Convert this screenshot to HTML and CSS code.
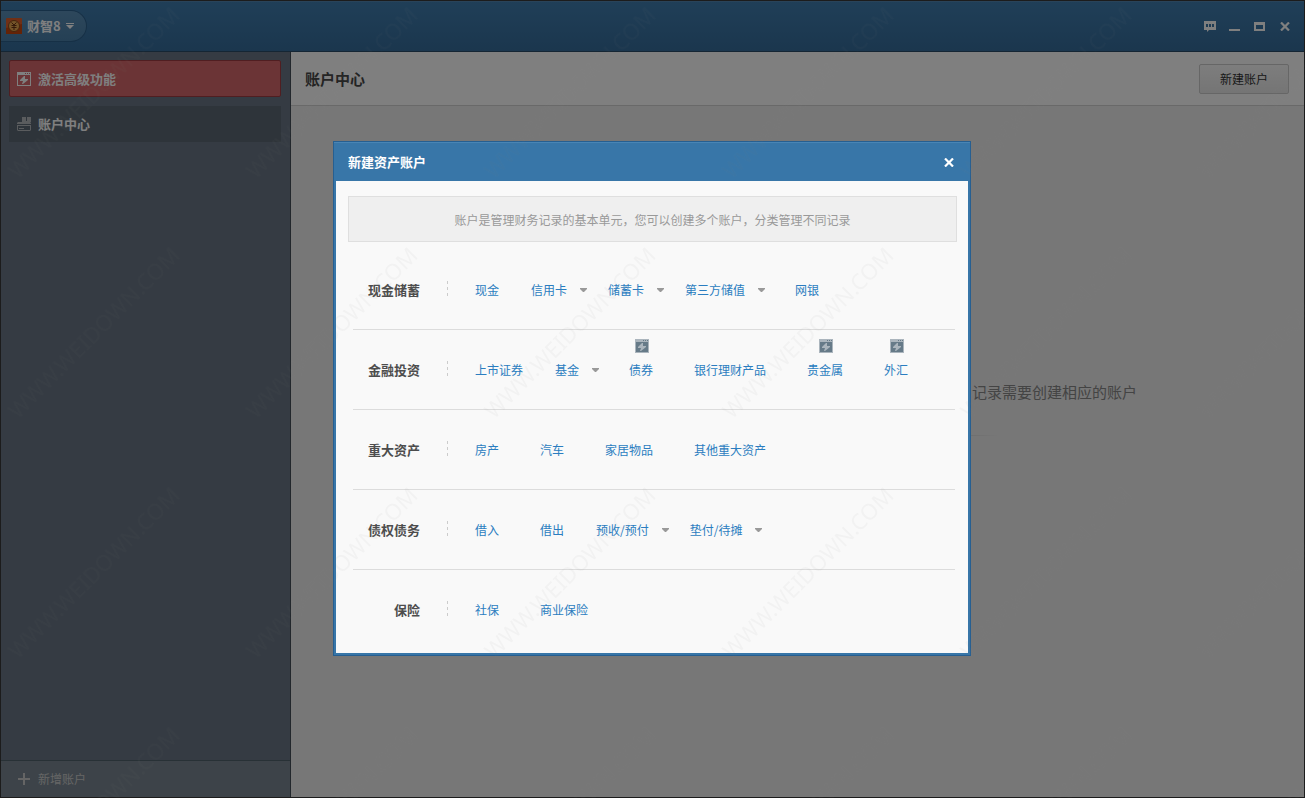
FILE: index.html
```html
<!DOCTYPE html>
<html lang="zh-CN">
<head>
<meta charset="utf-8">
<title>财智8</title>
<link rel="stylesheet" href="styles.css">
</head>
<body>
<svg class="defs" aria-hidden="true">
  <symbol id="bolt" viewBox="0 0 14 14">
    <path fill-rule="evenodd" d="M0 0H14V14H0ZM1 3V13H13V3ZM8 1V2H9V1ZM10 1V2H11V1ZM12 1V2H13V1Z"/>
    <path d="M8 4H7L3 8V9H6L5 12H6L11 8V7H8Z"/>
  </symbol>
  <symbol id="caret" viewBox="0 0 7 4"><path d="M0 0H7V1L4 4H3L0 1Z"/></symbol>
  <symbol id="close" viewBox="0 0 10 9"><path d="M1 0.500L9 8.500M9 0.500L1 8.500" fill="none" stroke="currentColor" stroke-width="2.200"/></symbol>
</svg>

<div class="window">
  <header class="titlebar">
    <button class="brand" type="button">
      <svg class="logo" viewBox="0 0 16 16" aria-hidden="true">
        <rect width="16" height="16" rx="1" fill="#e0602c"/>
        <path d="M0 10L16 6V16H0Z" fill="#c8460e"/>
        <circle cx="8" cy="8" r="5.500" fill="#e8a850" stroke="#8a4a1c"/>
        <path d="M5.500 4.500L8 7 10.500 4.500M8 7V12M5.500 7.500H10.500M5.500 9.500H10.500" fill="none" stroke="#6a3414"/>
      </svg>
      <span>财智8</span>
      <svg class="brand-arrow" viewBox="0 0 8 6" aria-hidden="true"><path d="M0 0H8V1H0ZM0 2H8L4 6Z"/></svg>
    </button>
    <div class="controls">
      <button type="button" aria-label="反馈"><svg width="12" height="11" viewBox="0 0 12 11"><path fill-rule="evenodd" d="M0 0H12V9H5L3 11V9H0ZM2 3V6H4V3ZM5 3V6H7V3ZM8 3V6H10V3Z"/></svg></button>
      <button type="button" aria-label="最小化"><svg width="11" height="9" viewBox="0 0 11 9"><path d="M0 7H11V9H0Z"/></svg></button>
      <button type="button" aria-label="最大化"><svg width="11" height="9" viewBox="0 0 11 9"><path fill-rule="evenodd" d="M0 0H11V9H0ZM2 3V7H9V3Z"/></svg></button>
      <button type="button" aria-label="关闭"><svg width="10" height="9"><use href="#close"/></svg></button>
    </div>
  </header>

  <div class="workspace">
    <aside class="sidebar">
      <nav class="menu">
        <button class="menu-item upgrade" type="button"><svg width="14" height="14" aria-hidden="true"><use href="#bolt"/></svg>激活高级功能</button>
        <button class="menu-item current" type="button"><svg width="14" height="14" viewBox="0 0 14 14" aria-hidden="true"><path fill-rule="evenodd" d="M5 0H9V4H10V0H14V5H5ZM1 5H13L14 6V7H0V6ZM0 8H14V13L13 14H1L0 13ZM1 9V13H13V9ZM2 11H7V12H2Z"/></svg>账户中心</button>
      </nav>
      <button class="add" type="button"><svg width="12" height="12" viewBox="0 0 12 12" aria-hidden="true"><path d="M5 0H7V5H12V7H7V12H5V7H0V5H5Z"/></svg>新增账户</button>
    </aside>
    <main class="main">
      <div class="page-head">
        <h1>账户中心</h1>
        <button class="new" type="button">新建账户</button>
      </div>
      <div class="empty"><p>记录需要创建相应的账户</p><hr></div>
    </main>
  </div>
</div>

<div class="backdrop">
  <section class="dialog" role="dialog" aria-labelledby="dialog-title">
    <header class="dialog-head">
      <h2 id="dialog-title">新建资产账户</h2>
      <button type="button" aria-label="关闭"><svg width="10" height="9"><use href="#close"/></svg></button>
    </header>
    <div class="dialog-body">
      <p class="notice">账户是管理财务记录的基本单元，您可以创建多个账户，分类管理不同记录</p>
      <div class="row">
        <h3>现金储蓄</h3>
        <ul>
          <li><a href="#">现金</a></li>
          <li class="more"><a href="#">信用卡<svg class="caret"><use href="#caret"/></svg></a></li>
          <li class="more"><a href="#">储蓄卡<svg class="caret"><use href="#caret"/></svg></a></li>
          <li class="more"><a href="#">第三方储值<svg class="caret"><use href="#caret"/></svg></a></li>
          <li><a href="#">网银</a></li>
        </ul>
      </div>
      <div class="row">
        <h3>金融投资</h3>
        <ul>
          <li><a href="#">上市证券</a></li>
          <li class="more"><a href="#">基金<svg class="caret"><use href="#caret"/></svg></a></li>
          <li><a href="#"><svg class="badge" viewBox="0 0 14 14"><rect width="14" height="14"/><use href="#bolt"/></svg>债券</a></li>
          <li><a href="#">银行理财产品</a></li>
          <li><a href="#"><svg class="badge" viewBox="0 0 14 14"><rect width="14" height="14"/><use href="#bolt"/></svg>贵金属</a></li>
          <li><a href="#"><svg class="badge" viewBox="0 0 14 14"><rect width="14" height="14"/><use href="#bolt"/></svg>外汇</a></li>
        </ul>
      </div>
      <div class="row">
        <h3>重大资产</h3>
        <ul>
          <li><a href="#">房产</a></li>
          <li><a href="#">汽车</a></li>
          <li><a href="#">家居物品</a></li>
          <li><a href="#">其他重大资产</a></li>
        </ul>
      </div>
      <div class="row">
        <h3>债权债务</h3>
        <ul>
          <li><a href="#">借入</a></li>
          <li><a href="#">借出</a></li>
          <li class="more"><a href="#">预收/预付<svg class="caret"><use href="#caret"/></svg></a></li>
          <li class="more"><a href="#">垫付/待摊<svg class="caret"><use href="#caret"/></svg></a></li>
        </ul>
      </div>
      <div class="row">
        <h3>保险</h3>
        <ul>
          <li><a href="#">社保</a></li>
          <li><a href="#">商业保险</a></li>
        </ul>
      </div>
    </div>
  </section>
</div>

<svg class="watermark" aria-hidden="true">
  <defs>
    <pattern id="mark" width="238" height="240" patternUnits="userSpaceOnUse">
      <text transform="translate(18 180) rotate(-45)">WWW.WEIDOWN.COM</text>
    </pattern>
  </defs>
  <rect width="100%" height="100%" fill="url(#mark)"/>
</svg>
</body>
</html>
```

FILE: styles.css
```css
* { box-sizing: border-box; }
body, h1, h2, h3, p, ul { margin: 0; padding: 0; }
body {
  font: 12px/18px "Noto Sans CJK SC", "Liberation Sans", sans-serif;
}
button { font: inherit; border: 0; background: none; padding: 0; color: inherit; cursor: pointer; }
svg { display: block; fill: currentColor; flex: none; }
.defs { position: absolute; width: 0; height: 0; }

.window {
  display: flex;
  flex-direction: column;
  height: 100vh;
  border: 1px solid #383838;
}
.titlebar {
  display: flex;
  align-items: center;
  justify-content: space-between;
  height: 51px;
  padding-right: 7px;
  border-bottom: 1px solid #2a4c68;
  background: linear-gradient(#407eb0, #366d9c);
  box-shadow: inset 0 1px #5287b2;
  color: #fff;
}
.brand {
  display: flex;
  align-items: center;
  height: 32px;
  padding: 0 12px 0 5px;
  border: 1px solid #2d608c;
  border-left: 0;
  border-radius: 0 16px 16px 0;
  background: linear-gradient(#5b8fb8, #4a80aa);
  font-size: 13px;
  font-weight: bold;
}
.logo { width: 16px; height: 16px; margin-right: 5px; }
.brand-arrow { width: 8px; height: 6px; margin-left: 5px; }
.controls { display: flex; }
.controls button {
  display: flex;
  align-items: center;
  justify-content: center;
  width: 25px;
  height: 24px;
}

.workspace { display: flex; flex: 1; min-height: 0; }
.sidebar {
  display: flex;
  flex-direction: column;
  justify-content: space-between;
  width: 290px;
  border-right: 1px solid #454f59;
  background: #6a7686;
  color: #fff;
}
.menu { display: flex; flex-direction: column; gap: 9px; padding: 8px 9px 8px 8px; }
.menu-item {
  display: flex;
  align-items: center;
  gap: 7px;
  height: 36px;
  padding: 0 8px;
  font-size: 13px;
  font-weight: bold;
}
.menu-item svg { width: 14px; }
.upgrade { height: 37px; padding: 0 7px; border: 1px solid #a03c42; border-radius: 2px; background: #d6696c; }
.current { background: #5d6974; }
.current svg { color: #b4b8bd; }
.add {
  display: flex;
  align-items: center;
  gap: 8px;
  height: 37px;
  padding: 0 17px;
  border-top: 1px solid #50636d;
  background: #7a8792;
  color: #cbcbcb;
}

.main { display: flex; flex: 1; flex-direction: column; background: #eee; }
.page-head {
  display: flex;
  align-items: center;
  justify-content: space-between;
  height: 54px;
  padding: 0 15px 0 14px;
  border-bottom: 1px solid #d2d2d2;
  background: #fff;
}
h1 { font-size: 15px; line-height: 24px; color: #484848; }
.new {
  width: 90px;
  height: 30px;
  border: 1px solid #ccc;
  border-radius: 2px;
  background: linear-gradient(#fbfbfb, #eaeaea);
  color: #333;
}
.empty { padding: 274px 0 0 514px; color: #888; text-align: center; }
.empty p { font-size: 15px; line-height: 24px; }
.empty hr { width: 190px; height: 1px; margin: 31px auto 0; border: 0; background: linear-gradient(90deg, #d8d8d8, #eee 20%); }

.backdrop {
  position: fixed;
  inset: 0;
  display: flex;
  align-items: center;
  justify-content: center;
  padding: 0 1px 1px 0;
  background: rgba(0, 0, 0, 0.5);
}
.dialog { width: 638px; border: 1px solid #265f91; background: #3876a8; }
.dialog-head {
  display: flex;
  align-items: center;
  justify-content: space-between;
  height: 39px;
  padding: 0 16px 0 14px;
  border-top: 1px solid #4985b5;
  color: #fff;
}
h2 { font-size: 13px; line-height: 20px; }
.dialog-body { margin: 0 2px 2px; padding: 15px 11px 3px 12px; background: #f9f9f9; }
.notice {
  margin-bottom: 8px;
  padding: 14px 12px 12px;
  border: 1px solid #dfdfdf;
  background: #efefef;
  color: #999;
  text-align: center;
}
.row {
  display: flex;
  align-items: center;
  height: 80px;
  margin: 0 2px 0 5px;
  border-bottom: 1px solid #dcdcdc;
}
.row:last-child { border-bottom-color: transparent; }
h3 { width: 67px; font-size: 13px; line-height: 20px; color: #4d4d4d; text-align: right; }
.row ul {
  display: flex;
  margin-left: 27px;
  padding-left: 7px;
  list-style: none;
  background: repeating-linear-gradient(#ccc 0 3px, transparent 3px 6px) 0 0 / 1px 15px no-repeat;
}
.row li { padding: 0 20px 0 21px; }
.row .more { padding: 0 9px 0 12px; }
.row a {
  position: relative;
  display: flex;
  align-items: center;
  color: #2b7dc0;
  text-decoration: none;
}
.caret { width: 7px; height: 4px; margin-left: 13px; color: #999; }
.badge { position: absolute; bottom: 26px; left: calc(50% - 6px); width: 14px; height: 14px; color: #abb5bd; }
.badge rect { fill: #667a88; }

.watermark { position: fixed; inset: 0; width: 100%; height: 100%; pointer-events: none; }
.watermark text { font: 22px "Noto Sans", sans-serif; fill: #808080; fill-opacity: 0.05; }
```
